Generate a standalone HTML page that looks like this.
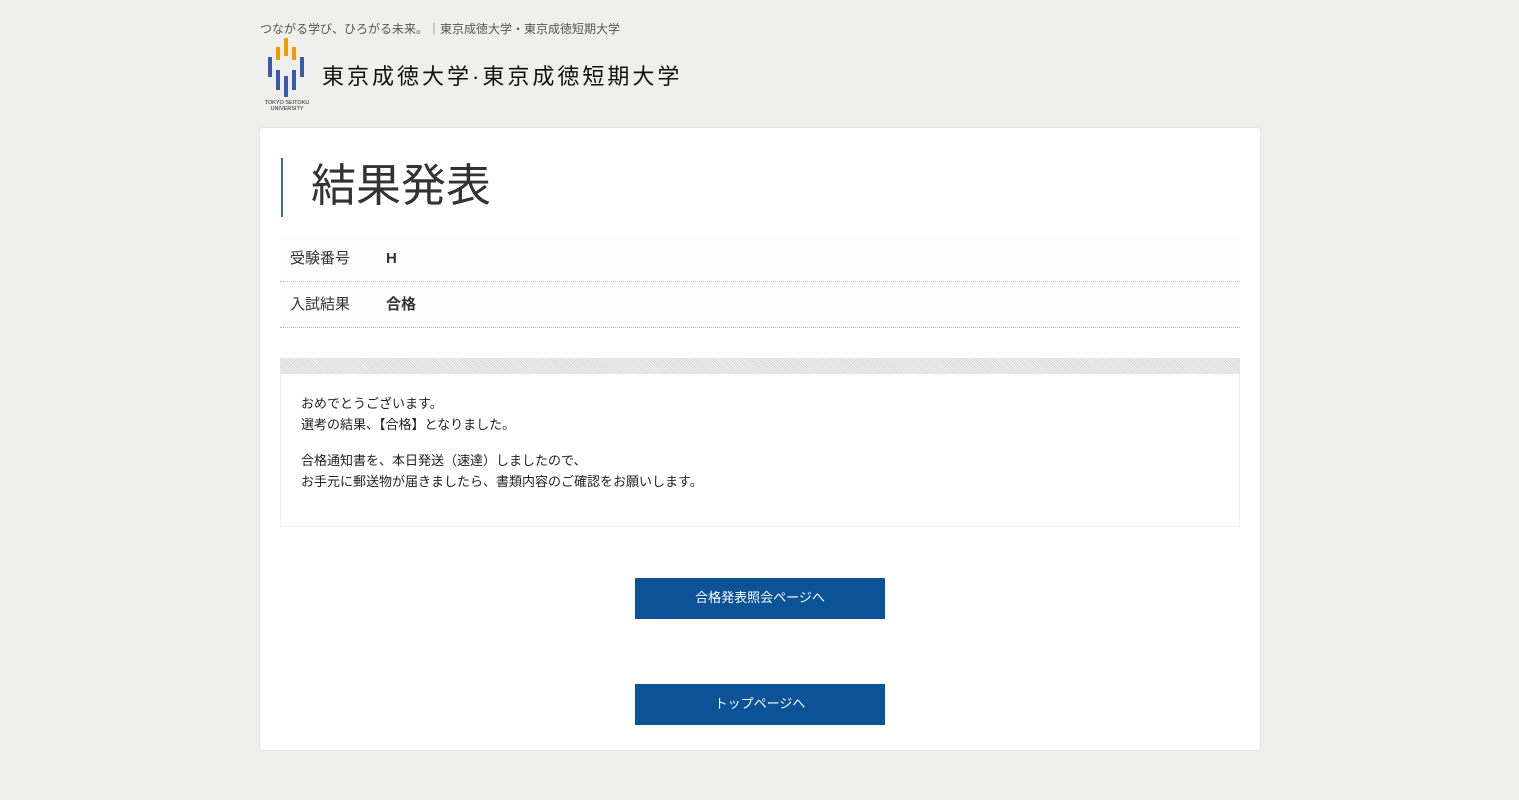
<!DOCTYPE html>
<html><head><meta charset="utf-8"><style>
body{margin:0;width:1519px;height:800px;background:#efefee;font-family:"Liberation Sans","Noto Sans CJK JP",sans-serif;color:#333;position:relative;overflow:hidden}
.a{position:absolute}
.tag{left:260px;top:20px;font-size:12px;color:#555}
.name{left:322px;top:59px;font-size:22px;color:#111;letter-spacing:3px}
.card{left:260px;top:128px;width:1000px;height:622px;background:#fff;border-radius:3px;box-shadow:0 0 2px rgba(0,0,0,.12)}
.ttl{left:281px;top:158px;height:59px;border-left:2px solid #3a6ea5;padding-left:28px;font-size:45px;line-height:56px;color:#333}
.row{left:280px;width:960px;height:44px;background:#fcfcfc;border-bottom:1px dotted #bbb;font-size:15px;line-height:44px}
.row span{position:absolute;left:10px}
.row b{position:absolute;left:106px}
.hatch{left:280px;top:358px;width:960px;height:16px;background:repeating-linear-gradient(45deg,#ddd 0 1px,#eee 1px 2px)}
.box{left:280px;top:374px;width:958px;height:152px;border:1px solid #eee;border-top:none;font-size:13px;line-height:21px;color:#222}
.btn{left:635px;width:250px;height:41px;background:#0b5396;color:#fff;font-size:13px;text-align:center;line-height:40px}
</style></head><body>
<div class="a tag">つながる学び、ひろがる未来。｜東京成徳大学・東京成徳短期大学</div>
<svg class="a" style="left:262px;top:36px" width="52" height="78">
<g fill="#f29a00"><rect x="14" y="11" width="4" height="13"/><rect x="22" y="2" width="4" height="18"/><rect x="30" y="11" width="4" height="13"/></g>
<g fill="#3a5ca8"><rect x="6" y="21" width="4" height="20"/><rect x="38" y="21" width="4" height="20"/><rect x="14" y="34" width="4" height="20"/><rect x="22" y="40" width="4" height="21"/><rect x="30" y="34" width="4" height="20"/></g>
<text x="25" y="68" font-size="5.5" text-anchor="middle" fill="#222" font-family="Liberation Sans">TOKYO SEITOKU</text>
<text x="25" y="74" font-size="5.5" text-anchor="middle" fill="#222" font-family="Liberation Sans">UNIVERSITY</text>
</svg>
<div class="a name">東京成徳大学·東京成徳短期大学</div>
<div class="a card"></div>
<div class="a ttl">結果発表</div>
<div class="a row" style="top:237px"><span>受験番号</span><b>H</b></div>
<div class="a row" style="top:283px"><span>入試結果</span><b>合格</b></div>
<div class="a hatch"></div>
<div class="a box"><div style="padding:19px 0 0 20px">おめでとうございます。<br>選考の結果、【合格】となりました。<div style="height:15px"></div>合格通知書を、本日発送（速達）しましたので、<br>お手元に郵送物が届きましたら、書類内容のご確認をお願いします。</div></div>
<div class="a btn" style="top:578px">合格発表照会ページへ</div>
<div class="a btn" style="top:684px">トップページへ</div>
</body></html>
